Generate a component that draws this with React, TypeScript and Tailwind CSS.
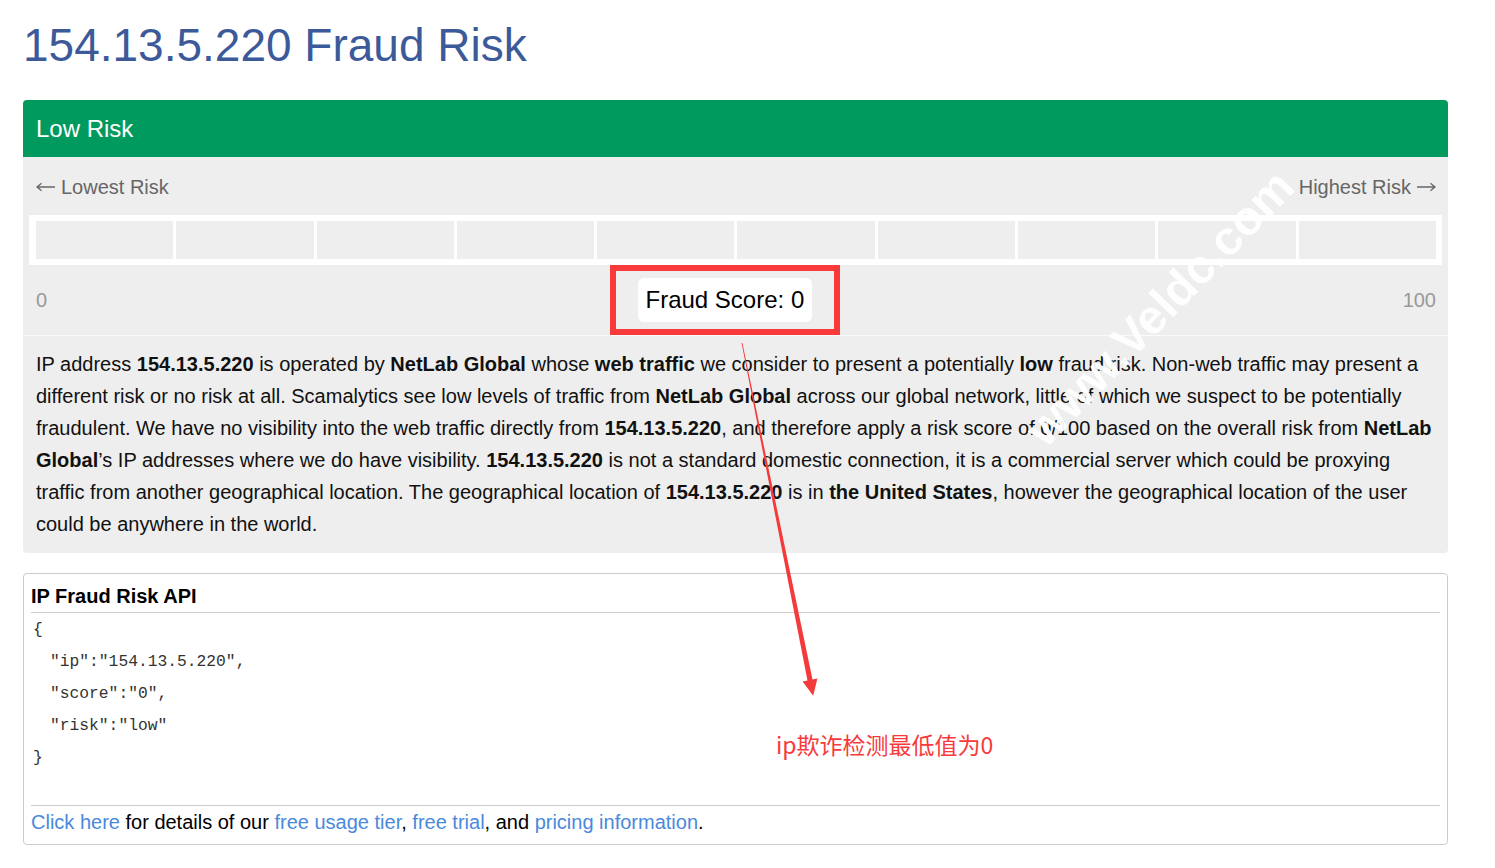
import React from "react";

const B = ({ children }: { children: React.ReactNode }) => (
  <b className="font-bold">{children}</b>
);

const ArrowLeft = () => (
  <svg width="19" height="10" viewBox="0 0 19 10" className="inline-block align-middle mb-[1px]">
    <path d="M1 5H19M5.5 1.2L1 5L5.5 8.8" fill="none" stroke="#666" strokeWidth="1.3" />
  </svg>
);

const ArrowRight = () => (
  <svg width="19" height="10" viewBox="0 0 19 10" className="inline-block align-middle mb-[1px]">
    <path d="M0 5H18M13.5 1.2L18 5L13.5 8.8" fill="none" stroke="#666" strokeWidth="1.3" />
  </svg>
);

export default function App() {
  const segs = Array.from({ length: 10 });
  return (
    <div
      className="relative w-[1495px] h-[868px] bg-white overflow-hidden"
      style={{ fontFamily: '"Liberation Sans", Arial, sans-serif' }}
    >
      <div className="px-[23px] w-[1448px] box-content">
        <h1 className="pt-[20px] text-[46px] leading-[50px] text-[#3c5a9a] font-normal">
          154.13.5.220 Fraud Risk
        </h1>

        {/* Risk card */}
        <div className="mt-[30px] w-[1425px] rounded-[4px] overflow-hidden bg-[#eeeeee]">
          <div className="h-[57px] bg-[#019a5e] flex items-center px-[13px] text-white text-[24px]">
            Low Risk
          </div>
          <div className="flex justify-between pl-[13px] pr-[12px] pt-[18px] text-[20px] leading-[24px] text-[#666]">
            <span className="flex items-center gap-[6px]">
              <ArrowLeft />
              Lowest Risk
            </span>
            <span className="flex items-center gap-[6px]">
              Highest Risk
              <ArrowRight />
            </span>
          </div>
          <div className="mt-[16px] mx-[6px] bg-white pl-[7px] pr-[6px] py-[6px] flex gap-[3px]">
            {segs.map((_, i) => (
              <div key={i} className="flex-1 h-[38px] bg-[#eeeeee]" />
            ))}
          </div>
          <div className="flex justify-between items-center pl-[13px] pr-[12px] py-[13px] text-[20px] leading-[24px] text-[#999]">
            <span>0</span>
            <span className="bg-white rounded-[6px] px-[8px] h-[44px] flex items-center text-[24px] text-black">
              Fraud Score: 0
            </span>
            <span>100</span>
          </div>
          <div className="h-px bg-[#fafafa]" />
          <p className="px-[13px] pt-[12px] pb-[13px] text-[20px] leading-[32px] text-[#111]">
            IP address <B>154.13.5.220</B> is operated by <B>NetLab Global</B> whose{" "}
            <B>web traffic</B> we consider to present a potentially <B>low</B> fraud risk.
            Non-web traffic may present a different risk or no risk at all. Scamalytics see
            low levels of traffic from <B>NetLab Global</B> across our global network, little
            of which we suspect to be potentially fraudulent. We have no visibility into the
            web traffic directly from <B>154.13.5.220</B>, and therefore apply a risk score of
            0/100 based on the overall risk from <B>NetLab Global</B>’s IP addresses where we
            do have visibility. <B>154.13.5.220</B> is not a standard domestic connection, it is
            a commercial server which could be proxying traffic from another geographical
            location. The geographical location of <B>154.13.5.220</B> is in{" "}
            <B>the United States</B>, however the geographical location of the user could be
            anywhere in the world.
          </p>
        </div>

        {/* API card */}
        <div className="mt-[20px] w-[1425px] border border-[#cccccc] rounded-[4px] px-[7px] pt-[10px] pb-[10px]">
          <div className="text-[20px] leading-[24px] font-bold text-black">IP Fraud Risk API</div>
          <div className="mt-[4px] h-px bg-[#cccccc]" />
          <div
            className="pl-[2px] pt-[1px] text-[16.3px] leading-[32px] text-[#333]"
            style={{ fontFamily: '"Liberation Mono", "Courier New", monospace' }}
          >
            <div>{"{"}</div>
            <div className="pl-[17px]">"ip":"154.13.5.220",</div>
            <div className="pl-[17px]">"score":"0",</div>
            <div className="pl-[17px]">"risk":"low"</div>
            <div>{"}"}</div>
            <div className="h-[31px]" />
          </div>
          <div className="h-px bg-[#cccccc]" />
          <div className="mt-[4px] text-[20px] leading-[24px] text-black">
            <span className="text-[#4a89dc]">Click here</span> for details of our{" "}
            <span className="text-[#4a89dc]">free usage tier</span>,{" "}
            <span className="text-[#4a89dc]">free trial</span>, and{" "}
            <span className="text-[#4a89dc]">pricing information</span>.
          </div>
        </div>
      </div>

      {/* Annotations */}
      <div className="absolute left-[610px] top-[265px] w-[230px] h-[70px] border-[6.5px] border-[#f83a3a] pointer-events-none" />

      <div
        className="absolute left-[1160px] top-[308px] text-[48px] font-bold text-white opacity-95 whitespace-nowrap pointer-events-none"
        style={{ transform: "translate(-50%, -50%) rotate(-46deg)" }}
      >
        www.Veldc.com
      </div>

      <svg
        className="absolute left-0 top-0 pointer-events-none"
        width="1495"
        height="868"
        viewBox="0 0 1495 868"
      >
        <polygon
          fill="#f43a3a"
          points="741.6,343 742.4,343 812.5,679.5 817.4,678.5 813.2,695.7 802.6,681.5 807.5,680.5"
        />
      </svg>

      <div
        className="absolute left-[776px] top-[729px] text-[23px] leading-[30px] text-[#f83a3a] whitespace-nowrap"
        style={{ fontFamily: '"Noto Sans CJK SC", "Liberation Sans", sans-serif' }}
      >
        ip欺诈检测最低值为0
      </div>
    </div>
  );
}
